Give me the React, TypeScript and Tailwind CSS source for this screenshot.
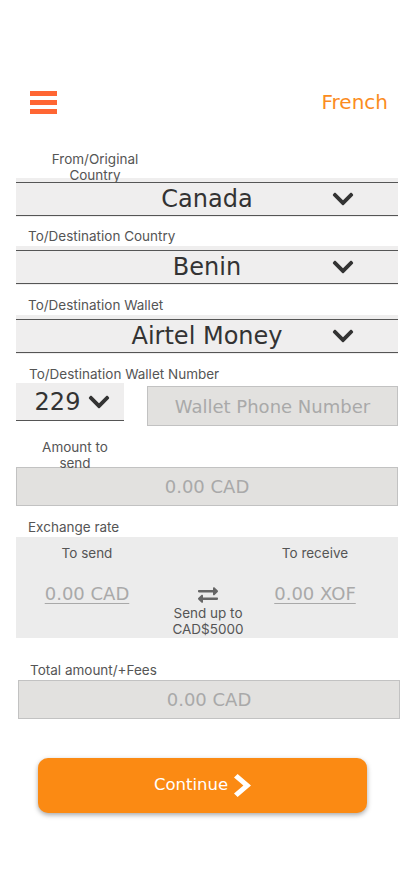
import React from "react";
import { FaChevronDown, FaExchangeAlt } from "react-icons/fa";

const valueFont = "font-['DejaVu_Sans',sans-serif]";
const labelFont = "font-['Inter',sans-serif]";

interface ISelectProps
{
    value: string;
}

interface IReadonlyProps
{
    value: string;
}

const SelectBox = (props: ISelectProps) => {
    return (
        <div className="bg-[#efeeee] pt-1 pb-px">
            <div className="relative flex h-[34px] items-center justify-center border-y border-[#555]">
                <span className={`${valueFont} text-[24px] leading-none text-[#333]`}>{props.value}</span>
                <FaChevronDown className="absolute right-[43px] text-[#333]" size={24} />
            </div>
        </div>
    );
};

const ReadonlyBox = (props: IReadonlyProps) => {
    return (
        <div className={`${valueFont} flex h-[39px] items-center justify-center border border-[#c2c2c2] bg-[#e2e1df] text-[18px] text-[#a9a9a9]`}>
            {props.value}
        </div>
    );
};

const ChevronRight = () => (
    <svg width="17" height="23" viewBox="0 0 17 23" fill="white">
        <path d="M0 3.6 L3.6 0 L17 11.5 L3.6 23 L0 19.4 L9.4 11.5 Z" />
    </svg>
);

export default function App()
{
    return (
        <div className={`${labelFont} min-h-[896px] w-[414px] bg-white`}>
            {/* header */}
            <header className="flex items-center justify-between pt-[90px] pl-[30px] pr-[26px]">
                <div className="flex h-6 flex-col justify-center gap-[4px]">
                    <div className="h-[5px] w-[27px] bg-[#ff6633]"></div>
                    <div className="h-[5px] w-[27px] bg-[#ff6633]"></div>
                    <div className="h-[5px] w-[27px] bg-[#ff6633]"></div>
                </div>
                <span className={`${valueFont} text-[20px] leading-6 text-[#fb8c1e]`}>French</span>
            </header>

            <main className="px-4 pt-[37px]">
                <div className="relative z-10 ml-[29px] h-[27px] w-[100px] text-center text-[13.5px] leading-4 text-[#555]">
                    From/Original Country
                </div>
                <SelectBox value="Canada" />

                <div className="mt-[11px] mb-[2px] pl-3 text-[13.5px] leading-4 text-[#555]">To/Destination Country</div>
                <SelectBox value="Benin" />

                <div className="mt-3 mb-[2px] pl-3 text-[13.5px] leading-4 text-[#555]">To/Destination Wallet</div>
                <SelectBox value="Airtel Money" />

                <div className="mt-3 mb-px pl-[13px] text-[13.5px] leading-4 text-[#555]">To/Destination Wallet Number</div>
                <div className="flex items-start gap-[23px]">
                    <div className="flex h-[38px] w-[108px] items-center justify-center gap-[7px] border-b border-[#555] bg-[#efeeee] pl-[6px]">
                        <span className={`${valueFont} text-[24px] leading-none text-[#333]`}>229</span>
                        <FaChevronDown className="text-[#333]" size={24} />
                    </div>
                    <input
                        className={`${valueFont} mt-[3px] h-[40px] min-w-0 flex-1 border border-[#c2c2c2] bg-[#e2e1df] text-center text-[18px] text-[#333] outline-none placeholder:text-[#a9a9a9]`}
                        placeholder="Wallet Phone Number"
                    />
                </div>

                <div className="relative z-10 mt-[13px] ml-[19px] h-[28px] w-[80px] text-center text-[13.5px] leading-4 text-[#555]">
                    Amount to send
                </div>
                <ReadonlyBox value="0.00 CAD" />

                <div className="mt-[13px] mb-[2px] pl-3 text-[13.5px] leading-4 text-[#555]">Exchange rate</div>
                <div className="flex h-[101px] bg-[#ececec]">
                    <div className="flex w-[142px] flex-col items-center pt-2">
                        <span className="text-[13.5px] leading-4 text-[#555]">To send</span>
                        <span className={`${valueFont} mt-[22px] text-[18px] leading-[22px] text-[#a9a9a9] underline underline-offset-[3px]`}>0.00 CAD</span>
                    </div>
                    <div className="flex w-[100px] flex-col items-center pt-[48px]">
                        <FaExchangeAlt className="text-[#666]" size={20} />
                        <span className="text-center text-[13.5px] leading-4 text-[#555]">Send up to CAD$5000</span>
                    </div>
                    <div className="flex w-[114px] flex-col items-center pt-2">
                        <span className="text-[13.5px] leading-4 text-[#555]">To receive</span>
                        <span className={`${valueFont} mt-[22px] text-[18px] leading-[22px] text-[#a9a9a9] underline underline-offset-[3px]`}>0.00 XOF</span>
                    </div>
                </div>

                <div className="mt-6 mb-[2px] pl-[14px] text-[13.5px] leading-4 text-[#555]">Total amount/+Fees</div>
                <div className="ml-[2px] mr-[-2px]">
                    <ReadonlyBox value="0.00 CAD" />
                </div>

                <button className="mt-[39px] ml-[22px] flex h-[55px] w-[329px] items-center justify-center gap-[6px] rounded-[10px] bg-[#fb8a13] shadow-[0_2px_5px_rgba(0,0,0,0.35)]">
                    <span className={`${valueFont} text-[16.5px] text-white`}>Continue</span>
                    <ChevronRight />
                </button>
            </main>
        </div>
    );
}
